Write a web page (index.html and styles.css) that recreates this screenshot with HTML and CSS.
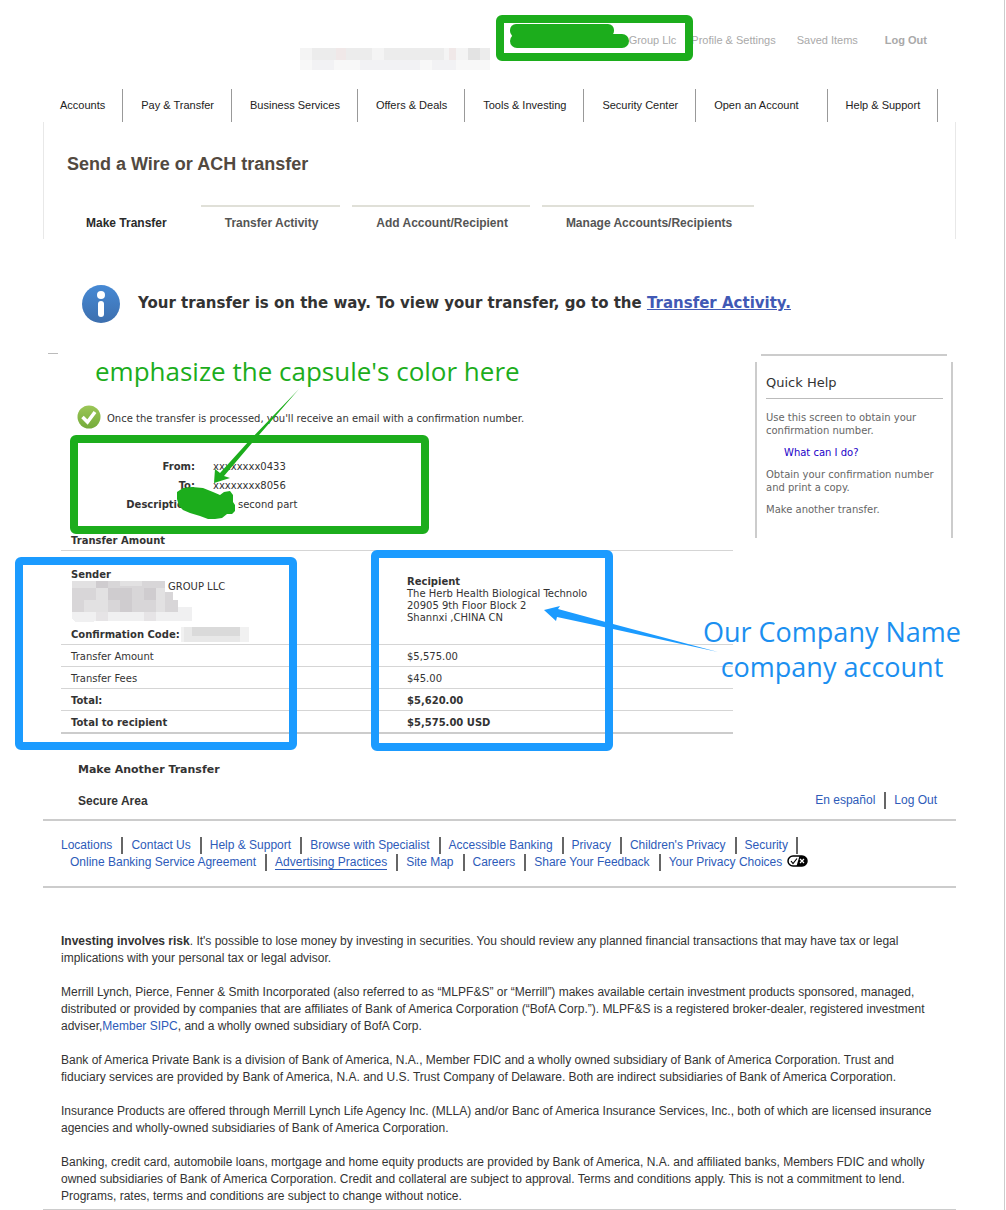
FILE: index.html
```html
<!DOCTYPE html>
<html lang="en">
<head>
    <meta charset="UTF-8">
    <meta name="viewport" content="width=device-width, initial-scale=1.0">
    <title>Send a Wire or ACH transfer</title>
    <link rel="stylesheet" href="styles.css">
</head>
<body>
    <div class="page">
        <header>
            <div class="utility">
                <span>Group Llc</span>
                <a href="#">Profile &amp; Settings</a>
                <a href="#" class="saved">Saved Items</a>
                <a href="#" class="logout">Log Out</a>
            </div>
            <nav class="main-nav">
                <a href="#">Accounts</a>
                <a href="#">Pay &amp; Transfer</a>
                <a href="#">Business Services</a>
                <a href="#">Offers &amp; Deals</a>
                <a href="#">Tools &amp; Investing</a>
                <a href="#">Security Center</a>
                <a href="#" class="wide">Open an Account</a>
                <a href="#">Help &amp; Support</a>
            </nav>
        </header>

        <section class="title-frame">
            <h1>Send a Wire or ACH transfer</h1>
            <nav class="tabs">
                <a href="#" class="active">Make Transfer</a>
                <a href="#">Transfer Activity</a>
                <a href="#">Add Account/Recipient</a>
                <a href="#">Manage Accounts/Recipients</a>
            </nav>
        </section>

        <div class="banner">
            <svg width="40" height="40" viewBox="0 0 40 40">
                <defs>
                    <linearGradient id="info-fill" x1="0" y1="0" x2="0" y2="1">
                        <stop offset="0" stop-color="#4689d4"/>
                        <stop offset="1" stop-color="#3d6fae"/>
                    </linearGradient>
                </defs>
                <circle cx="20" cy="20" r="19" fill="url(#info-fill)"/>
                <circle cx="20" cy="11" r="4" fill="#fff"/>
                <rect x="17" y="17" width="6" height="16" rx="3" fill="#fff"/>
            </svg>
            <h2>Your transfer is on the way. To view your transfer, go to the <a href="#">Transfer Activity.</a></h2>
        </div>

        <main>
            <div class="details">
                <p class="processed">
                    <svg width="24" height="24" viewBox="0 0 24 24">
                        <defs>
                            <linearGradient id="check-fill" x1="0" y1="0" x2="0" y2="1">
                                <stop offset="0" stop-color="#9bc657"/>
                                <stop offset="1" stop-color="#74ab3a"/>
                            </linearGradient>
                        </defs>
                        <circle cx="12" cy="12" r="11.5" fill="url(#check-fill)"/>
                        <path d="M5.500 12l5 5 7.500-10" fill="none" stroke="#fff" stroke-width="3.500"/>
                    </svg>
                    <span>Once the transfer is processed, you'll receive an email with a confirmation number.</span>
                </p>
                <dl>
                    <dt>From:</dt><dd>xxxxxxxx0433</dd>
                    <dt>To:</dt><dd>xxxxxxxx8056</dd>
                    <dt>Description:</dt><dd class="memo">second part</dd>
                </dl>
                <table>
                    <caption>Transfer Amount</caption>
                    <tbody>
                        <tr class="parties">
                            <td>
                                <b>Sender</b>
                                <div class="sender-name">GROUP LLC</div>
                                <b>Confirmation Code:</b>
                            </td>
                            <td class="recipient">
                                <b>Recipient</b><br>
                                The Herb Health Biological Technolo<br>
                                20905 9th Floor Block 2<br>
                                Shannxi ,CHINA CN
                            </td>
                        </tr>
                        <tr><td>Transfer Amount</td><td>$5,575.00</td></tr>
                        <tr><td>Transfer Fees</td><td>$45.00</td></tr>
                        <tr class="total"><td>Total:</td><td>$5,620.00</td></tr>
                        <tr class="total last"><td>Total to recipient</td><td>$5,575.00 USD</td></tr>
                    </tbody>
                </table>
                <a href="#" class="another">Make Another Transfer</a>
            </div>
            <aside>
                <div class="help-box">
                    <h3>Quick Help</h3>
                    <p>Use this screen to obtain your confirmation number.</p>
                    <p class="help-link"><a href="#">What can I do?</a></p>
                    <p>Obtain your confirmation number and print a copy.</p>
                    <p>Make another transfer.</p>
                </div>
            </aside>
        </main>

        <footer>
            <div class="secure">
                <b>Secure Area</b>
                <div class="links">
                    <a href="#">En español</a>
                    <a href="#">Log Out</a>
                </div>
            </div>
            <div class="footer-links">
                <div class="links">
                    <a href="#">Locations</a>
                    <a href="#">Contact Us</a>
                    <a href="#">Help &amp; Support</a>
                    <a href="#">Browse with Specialist</a>
                    <a href="#">Accessible Banking</a>
                    <a href="#">Privacy</a>
                    <a href="#">Children's Privacy</a>
                    <a href="#" class="divided">Security</a>
                </div>
                <div class="links second">
                    <a href="#">Online Banking Service Agreement</a>
                    <a href="#"><span class="ads">Advertising Practices</span></a>
                    <a href="#">Site Map</a>
                    <a href="#">Careers</a>
                    <a href="#">Share Your Feedback</a>
                    <a href="#">Your Privacy Choices
                        <svg width="21" height="12" viewBox="0 0 21 12">
                            <rect x="1" y="1" width="19" height="10" rx="5" fill="#fff" stroke="#000" stroke-width="1.500"/>
                            <path d="M12.500 1H15a5 5 0 0 1 0 10H9.500z" fill="#000"/>
                            <path d="M4 6l2 2.500 4-5" fill="none" stroke="#000" stroke-width="1.200"/>
                            <path d="M13 4l4 4m0-4l-4 4" stroke="#fff" stroke-width="1.200"/>
                        </svg>
                    </a>
                </div>
            </div>
            <div class="legal">
                <p><b>Investing involves risk</b>. It's possible to lose money by investing in securities. You should review any planned financial transactions that may have tax or legal implications with your personal tax or legal advisor.</p>
                <p>Merrill Lynch, Pierce, Fenner &amp; Smith Incorporated (also referred to as “MLPF&amp;S” or “Merrill”) makes available certain investment products sponsored, managed, distributed or provided by companies that are affiliates of Bank of America Corporation (“BofA Corp.”). MLPF&amp;S is a registered broker-dealer, registered investment adviser,<a href="#">Member SIPC</a>, and a wholly owned subsidiary of BofA Corp.</p>
                <p>Bank of America Private Bank is a division of Bank of America, N.A., Member FDIC and a wholly owned subsidiary of Bank of America Corporation. Trust and fiduciary services are provided by Bank of America, N.A. and U.S. Trust Company of Delaware. Both are indirect subsidiaries of Bank of America Corporation.</p>
                <p>Insurance Products are offered through Merrill Lynch Life Agency Inc. (MLLA) and/or Banc of America Insurance Services, Inc., both of which are licensed insurance agencies and wholly-owned subsidiaries of Bank of America Corporation.</p>
                <p>Banking, credit card, automobile loans, mortgage and home equity products are provided by Bank of America, N.A. and affiliated banks, Members FDIC and wholly owned subsidiaries of Bank of America Corporation. Credit and collateral are subject to approval. Terms and conditions apply. This is not a commitment to lend. Programs, rates, terms and conditions are subject to change without notice.</p>
            </div>
        </footer>

        <!-- Redactions and arrows drawn over the page -->
        <svg class="markup" width="1000" height="760" viewBox="0 0 1000 760">
            <g shape-rendering="crispEdges">
                <path fill="#f4f4f4" d="M300 48h190v12h-190z"/>
                <path fill="#ececec" d="M312 48h60v12h-60zM384 48h60v12h-60zM478 48h12v12h-12z"/>
                <path fill="#f0e8e8" d="M336 48h10v12h-10zM449 48h7v12h-7z"/>
                <path fill="#e3e3e3" d="M468 48h12v12h-12z"/>
                <path fill="#f8f8f8" d="M300 60h190v10h-190z"/>
                <path fill="#f2f2f4" d="M312 60h22v10h-22zM360 60h60v10h-60zM432 60h24v10h-24z"/>

                <path fill="#d8d6d8" d="M72 581h93v11h8v8h5v12H72z"/>
                <path fill="#e2e1e2" d="M72 581h24v7H72zM120 581h22v5h-22zM84 600h12v12H84zM96 588h12v24H96zM156 588h9v24h-9z"/>
                <path fill="#cfcccf" d="M96 581h12v7H96zM108 588h24v12h-24zM144 588h12v12h-12zM120 600h12v12h-12z"/>
                <path fill="#f0f0f1" d="M72 612h22v10H75l-3-4zM94 612h98v9H94zM178 607h14v5h-14z"/>
                <path fill="#e6e4e6" d="M96 612h12v9H96zM144 612h12v9h-12z"/>

                <path fill="#f1f1f1" d="M181 627h68v15h-68z"/>
                <path fill="#e8e8e8" d="M184 627h56v15h-56z"/>
                <path fill="#dadada" d="M192 627h48v9h-48z"/>
            </g>
            <g fill="#1cad1c">
                <rect x="510" y="24" width="104" height="13" rx="6"/>
                <rect x="510" y="34" width="119" height="14" rx="7"/>
                <path d="M514 32h90v6h-90z"/>
                <path d="M177 492l6-4 9-1 11 1 10 4 7 3 4-3 6-1 3 4 0 7 2 3 0 6-3 3h-5l-5 4-7 1-7 0-8-3-10-3-7-3-4-4-2-7z"/>
                <path d="M214 483l1-14 5 4 29-32 50-52-47 54-28 33 6 2z"/>
            </g>
            <path fill="#1b9bff" d="M544 610l16-4-2 3 55 15 105 28-105-23-56-12-1 4z"/>
        </svg>
        <div class="box green account-box"></div>
        <div class="box green transfer-box"></div>
        <div class="box blue sender-box"></div>
        <div class="box blue recipient-box"></div>
        <div class="note green-note">emphasize the capsule's color here</div>
        <div class="note blue-note">Our Company Name<br>company account</div>
    </div>
</body>
</html>
```
FILE: styles.css
```css
* {
    box-sizing: border-box;
}
body {
    margin: 0;
    font-family: "Liberation Sans", Arial, sans-serif;
    font-size: 12px;
    color: #333;
    background: #fff;
}
a {
    color: inherit;
    text-decoration: none;
}
h1, h2, h3, p, dl, dd {
    margin: 0;
}
.page {
    position: relative;
    margin-right: 1px;
    padding: 0 48px 0 43px;
    border-right: 1px solid #ccc;
}

/* header */
.utility {
    display: flex;
    justify-content: flex-end;
    gap: 15px;
    padding: 32px 29px 0 0;
    font-size: 11px;
    line-height: 16px;
    color: #a9a9a9;
}
.utility .saved {
    margin-left: 6px;
}
.utility .logout {
    margin-left: 12px;
    font-weight: bold;
}
.main-nav {
    display: flex;
    margin-top: 41px;
    font-size: 11px;
    line-height: 33px;
    color: #222;
}
.main-nav a {
    padding: 0 17px;
    border-right: 1px solid #999;
}
.main-nav a + a {
    padding-left: 18px;
}
.main-nav .wide {
    padding-right: 28px;
}

.title-frame {
    height: 117px;
    padding-left: 18px;
    border-left: 1px solid #e8e8e8;
    border-right: 1px solid #e8e8e8;
}
h1 {
    padding: 30px 0 0 5px;
    font-size: 18px;
    line-height: 24px;
    color: #524940;
}
.tabs {
    display: flex;
    gap: 12px;
    margin-top: 29px;
    font-weight: bold;
    line-height: 32px;
    color: #555;
}
.tabs a {
    padding: 0 22px 0 24px;
    border-top: 2px solid #e0e0d8;
}
.tabs .active {
    border-color: transparent;
    color: #2a2a2a;
}

.banner {
    display: flex;
    gap: 17px;
    margin: 45px 0 0 38px;
}
h2 {
    padding-top: 9px;
    font-family: "DejaVu Sans", Verdana, sans-serif;
    font-size: 15px;
    line-height: 20px;
}
h2 a {
    color: #4159b5;
    text-decoration: underline;
}

/* transfer details */
main {
    display: flex;
    gap: 22px;
    margin-top: 30px;
    padding: 0 3px 0 18px;
    font-family: "DejaVu Sans", Verdana, sans-serif;
    font-size: 10px;
    line-height: 12px;
}
main::before {
    content: "";
    width: 10px;
    margin: -1px -19px 0 -13px;
    border-top: 1px solid #bbb;
    height: 1px;
}
.details {
    flex: 1;
}
.processed {
    display: flex;
    align-items: center;
    gap: 6px;
    margin: 51px 0 0 16px;
}
.processed span {
    padding-top: 3px;
}
dl {
    display: grid;
    grid-template-columns: 134px 1fr;
    column-gap: 18px;
    padding: 28px 0 20px;
    line-height: 19px;
}
dt {
    text-align: right;
    font-weight: bold;
}
.memo {
    padding-left: 25px;
}
table {
    width: 100%;
    table-layout: fixed;
    border-collapse: collapse;
}
caption {
    padding: 1px 10px 3px;
    border-bottom: 1px solid #d5d5d5;
    text-align: left;
    font-weight: bold;
}
td {
    height: 22px;
    padding: 3px 10px 0;
    border-bottom: 1px solid #d5d5d5;
}
.parties td {
    height: 93px;
    padding-top: 18px;
    vertical-align: top;
}
.parties .recipient {
    padding-top: 25px;
}
.sender-name {
    height: 48px;
    padding-left: 97px;
}
.total td {
    font-weight: bold;
}
.last td {
    height: 23px;
    border-bottom: 2px solid #ccc;
}
.another {
    display: block;
    margin: 29px 0 0 17px;
    font-size: 11px;
    line-height: 14px;
    font-weight: bold;
}

/* quick help */
aside {
    width: 198px;
    color: #666;
    line-height: 13px;
}
aside::before {
    content: "";
    display: block;
    margin: 0 6px 6px;
    border-top: 2px solid #ccc;
}
.help-box {
    height: 176px;
    padding: 13px 8px 0 9px;
    border-left: 2px solid #ccc;
    border-right: 2px solid #ccc;
}
h3 {
    margin-bottom: 12px;
    padding-bottom: 7px;
    border-bottom: 1px solid #bbb;
    font-size: 13px;
    font-weight: normal;
    line-height: 16px;
    color: #333;
}
.help-box p {
    margin-bottom: 9px;
}
.help-box .help-link {
    padding-left: 18px;
    color: #2200c8;
}

/* footer */
.secure {
    display: flex;
    justify-content: space-between;
    align-items: center;
    padding: 15px 19px 10px 35px;
    border-bottom: 2px solid #ccc;
}
.links {
    display: flex;
    line-height: 17px;
    color: #2d5bb9;
}
.links a + a {
    margin-left: 9px;
    padding-left: 8px;
    border-left: 2px solid #666;
}
.links .divided {
    padding-right: 8px;
    border-right: 2px solid #666;
}
.footer-links {
    padding: 16px 18px 15px;
    border-bottom: 2px solid #ccc;
}
.second {
    padding-left: 9px;
}
.second svg {
    margin-left: 1px;
    vertical-align: -1px;
}
.ads {
    border-bottom: 1px solid #2d5bb9;
}
.legal {
    padding: 45px 20px 4px 18px;
    border-bottom: 1px solid #ccc;
    line-height: 17px;
}
.legal p + p {
    margin-top: 17px;
}
.legal a {
    color: #2d5bb9;
}

/* annotations over the page */
.markup {
    position: absolute;
    top: 0;
    left: 0;
}
.box {
    position: absolute;
    border: 8px solid;
    border-radius: 6px;
}
.green {
    border-color: #1cad1c;
}
.blue {
    border-color: #1b9bff;
}
.account-box {
    left: 496px;
    top: 15px;
    width: 197px;
    height: 46px;
}
.transfer-box {
    left: 70px;
    top: 435px;
    width: 359px;
    height: 99px;
}
.sender-box {
    left: 15px;
    top: 557px;
    width: 282px;
    height: 193px;
}
.recipient-box {
    left: 371px;
    top: 550px;
    width: 242px;
    height: 201px;
}
.note {
    position: absolute;
    font-family: "Open Sans", "Noto Sans", sans-serif;
    font-size: 26px;
    line-height: 35px;
    white-space: nowrap;
}
.green-note {
    left: 95px;
    top: 354px;
    color: #1cad1c;
}
.blue-note {
    left: 703px;
    top: 614px;
    font-size: 27px;
    text-align: center;
    color: #1b8ff0;
}
```
